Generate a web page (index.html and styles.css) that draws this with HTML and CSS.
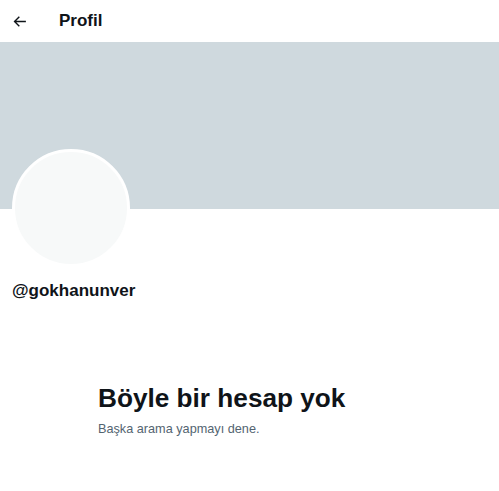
FILE: index.html
```html
<!DOCTYPE html>
<html lang="tr">
  <head>
    <meta charset="UTF-8" />
    <meta name="viewport" content="width=device-width, initial-scale=1.0" />
    <title>Profil</title>
    <link rel="stylesheet" href="styles.css">
  </head>
  <body>
    <div class="header">
      <div class="back-btn">
        <svg viewBox="0 0 24 24" width="17" height="17">
          <path d="M7.414 13l5.043 5.04-1.414 1.42L3.586 12l7.457-7.46 1.414 1.42L7.414 11H21v2H7.414z" fill="#0f1419"></path>
        </svg>
      </div>
      <div class="header-title">Profil</div>
    </div>

    <div class="banner"></div>

    <div class="profile">
      <div class="avatar"></div>
      <div class="handle">@gokhanunver</div>
    </div>

    <div class="empty-state">
      <div class="empty-title">Böyle bir hesap yok</div>
      <div class="empty-text">Başka arama yapmayı dene.</div>
    </div>
  </body>
</html>
```

FILE: styles.css
```css
* {
  margin: 0;
  padding: 0;
  box-sizing: border-box;
}

body {
  background: #fff;
  color: #0f1419;
  font-family: 'Liberation Sans', Arial, sans-serif;
  width: 499px;
  overflow: hidden;
}

.header {
  height: 42px;
  display: flex;
  align-items: center;
  padding-left: 11px;
}

.back-btn {
  width: 17px;
  height: 17px;
  display: flex;
  margin-right: 31px;
}

.header-title {
  font-size: 17px;
  font-weight: bold;
}

.banner {
  height: 167px;
  background: #cfd9de;
}

.profile {
  padding: 0 12px;
}

.avatar {
  width: 118px;
  height: 118px;
  margin-top: -60px;
  border-radius: 50%;
  background: #f7f9f9;
  border: 3px solid #fff;
}

.handle {
  margin-top: 14px;
  font-size: 17px;
  font-weight: bold;
  line-height: 20px;
}

.empty-state {
  width: 303px;
  margin: 82px auto 0;
}

.empty-title {
  font-size: 26.2px;
  font-weight: bold;
  line-height: 30px;
}

.empty-text {
  margin-top: 8px;
  font-size: 12.7px;
  line-height: 16px;
  color: #536471;
}
```
